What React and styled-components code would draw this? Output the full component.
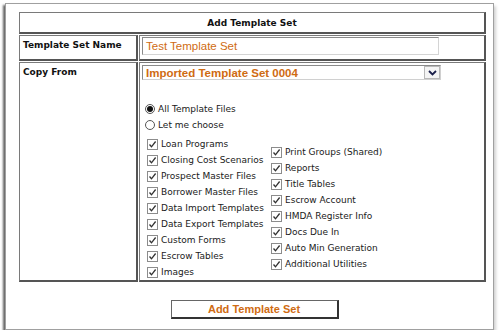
import React from "react";
import styled, { createGlobalStyle } from "styled-components";

const Global = createGlobalStyle`
  html, body { margin: 0; padding: 0; background: #fff; }
  body { font-family: "DejaVu Sans", Verdana, sans-serif; }
`;

const ORANGE = "#cf6b12";

const Frame = styled.div`
  box-sizing: border-box;
  margin: 3px 0 0 5px;
  width: 489px;
  height: 327px;
  border: 1px solid #a0a0a0;
  box-shadow: -2px 2px 2px rgba(0, 0, 0, 0.6), 2px 3px 3px rgba(0, 0, 0, 0.18);
  padding: 8px 7px 0 13px;
  background: #fff;
`;

const FormGrid = styled.div`
  display: grid;
  grid-template-columns: 119px 1fr;
  grid-template-rows: 22px 26px 220px;
  gap: 1px;
`;

const Cell = styled.div`
  box-sizing: border-box;
  border: 1px solid #7a7a7a;
  border-right: 2px solid #555;
  border-bottom: 2px solid #555;
  background: #fff;
`;

const HeaderCell = styled(Cell)`
  grid-column: 1 / -1;
  display: flex;
  align-items: center;
  justify-content: center;
  font-weight: bold;
  font-size: 9px;
  color: #111;
`;

const LabelCell = styled(Cell)`
  font-weight: bold;
  font-size: 9px;
  color: #111;
  padding: 4px 0 0 3px;
`;

const ValueCell = styled(Cell)`
  padding: 1px 0 0 2px;
  display: flex;
  flex-direction: column;
`;

const TextBox = styled.div`
  box-sizing: border-box;
  width: 297px;
  height: 18px;
  border: 1px solid #d4d4d4;
  border-top-color: #8a8a8a;
  border-left-color: #8a8a8a;
  font-family: "Liberation Sans", Arial, sans-serif;
  font-size: 11.5px;
  color: ${ORANGE};
  padding: 0 3px;
  display: flex;
  align-items: center;
`;

const SelectBox = styled.div`
  box-sizing: border-box;
  width: 299px;
  height: 17px;
  margin-top: 1px;
  border: 1px solid #d0d0d0;
  border-top-color: #8a8a8a;
  border-left-color: #8a8a8a;
  display: flex;
  align-items: stretch;
`;

const SelectText = styled.div`
  flex: 1;
  font-family: "Liberation Sans", Arial, sans-serif;
  font-size: 11.5px;
  font-weight: bold;
  color: ${ORANGE};
  padding-left: 3px;
  display: flex;
  align-items: center;
`;

const DropButton = styled.div`
  box-sizing: border-box;
  width: 16px;
  border: 1px solid #b8b8b8;
  background: #f4f4f4;
  display: flex;
  align-items: center;
  justify-content: center;
`;

const Options = styled.div`
  margin-top: 21px;
  padding-left: 3px;
  font-size: 9px;
  color: #1a1a1a;
`;

const RadioRow = styled.div`
  height: 16px;
  display: flex;
  align-items: center;
  gap: 3px;
`;

const RadioDot = styled.span`
  box-sizing: border-box;
  width: 10px;
  height: 10px;
  border-radius: 50%;
  border: 1px solid #555;
  background: #fff;
  display: flex;
  align-items: center;
  justify-content: center;
  &::after {
    content: "";
    width: 6px;
    height: 6px;
    border-radius: 50%;
    background: ${(p) => (p.$on ? "#111" : "transparent")};
  }
`;

const Checks = styled.div`
  display: flex;
  align-items: center;
  margin-top: 3px;
  padding-left: 2px;
`;

const CheckCol = styled.div`
  display: flex;
  flex-direction: column;
  width: ${(p) => p.$w || "auto"};
`;

const CheckRow = styled.div`
  height: 16px;
  display: flex;
  align-items: center;
  gap: 3px;
  white-space: nowrap;
`;

const Box = styled.span`
  box-sizing: border-box;
  width: 11px;
  height: 11px;
  border: 1px solid #8c8c8c;
  background: #fff;
  display: flex;
  align-items: center;
  justify-content: center;
`;

const ButtonRow = styled.div`
  display: flex;
  justify-content: center;
  padding-left: 4px;
  margin-top: 18px;
`;

const Button = styled.div`
  box-sizing: border-box;
  width: 168px;
  height: 19px;
  border: 1px solid #666;
  border-right: 2px solid #333;
  border-bottom: 2px solid #333;
  background: #fff;
  font-family: "Liberation Sans", Arial, sans-serif;
  font-size: 11px;
  font-weight: bold;
  color: ${ORANGE};
  display: flex;
  align-items: center;
  justify-content: center;
`;

const Check = () => (
  <Box>
    <svg width="9" height="9" viewBox="0 0 9 9">
      <path d="M1.5 4.5 L3.5 6.8 L7.6 1.5" fill="none" stroke="#333" strokeWidth="1.3" />
    </svg>
  </Box>
);

const left = [
  "Loan Programs",
  "Closing Cost Scenarios",
  "Prospect Master Files",
  "Borrower Master Files",
  "Data Import Templates",
  "Data Export Templates",
  "Custom Forms",
  "Escrow Tables",
  "Images",
];
const right = [
  "Print Groups (Shared)",
  "Reports",
  "Title Tables",
  "Escrow Account",
  "HMDA Register Info",
  "Docs Due In",
  "Auto Min Generation",
  "Additional Utilities",
];

export default function App() {
  return (
    <>
      <Global />
      <Frame>
        <FormGrid>
          <HeaderCell>Add Template Set</HeaderCell>
          <LabelCell>Template Set Name</LabelCell>
          <ValueCell>
            <TextBox>Test Template Set</TextBox>
          </ValueCell>
          <LabelCell>Copy From</LabelCell>
          <ValueCell>
            <SelectBox>
              <SelectText>Imported Template Set 0004</SelectText>
              <DropButton>
                <svg width="9" height="6" viewBox="0 0 9 6">
                  <path d="M1 1 L4.5 4.5 L8 1" fill="none" stroke="#1a1f4a" strokeWidth="1.8" />
                </svg>
              </DropButton>
            </SelectBox>
            <Options>
              <RadioRow>
                <RadioDot $on />
                All Template Files
              </RadioRow>
              <RadioRow>
                <RadioDot />
                Let me choose
              </RadioRow>
              <Checks>
                <CheckCol $w="124px">
                  {left.map((t) => (
                    <CheckRow key={t}>
                      <Check />
                      {t}
                    </CheckRow>
                  ))}
                </CheckCol>
                <CheckCol>
                  {right.map((t) => (
                    <CheckRow key={t}>
                      <Check />
                      {t}
                    </CheckRow>
                  ))}
                </CheckCol>
              </Checks>
            </Options>
          </ValueCell>
        </FormGrid>
        <ButtonRow>
          <Button>Add Template Set</Button>
        </ButtonRow>
      </Frame>
    </>
  );
}
